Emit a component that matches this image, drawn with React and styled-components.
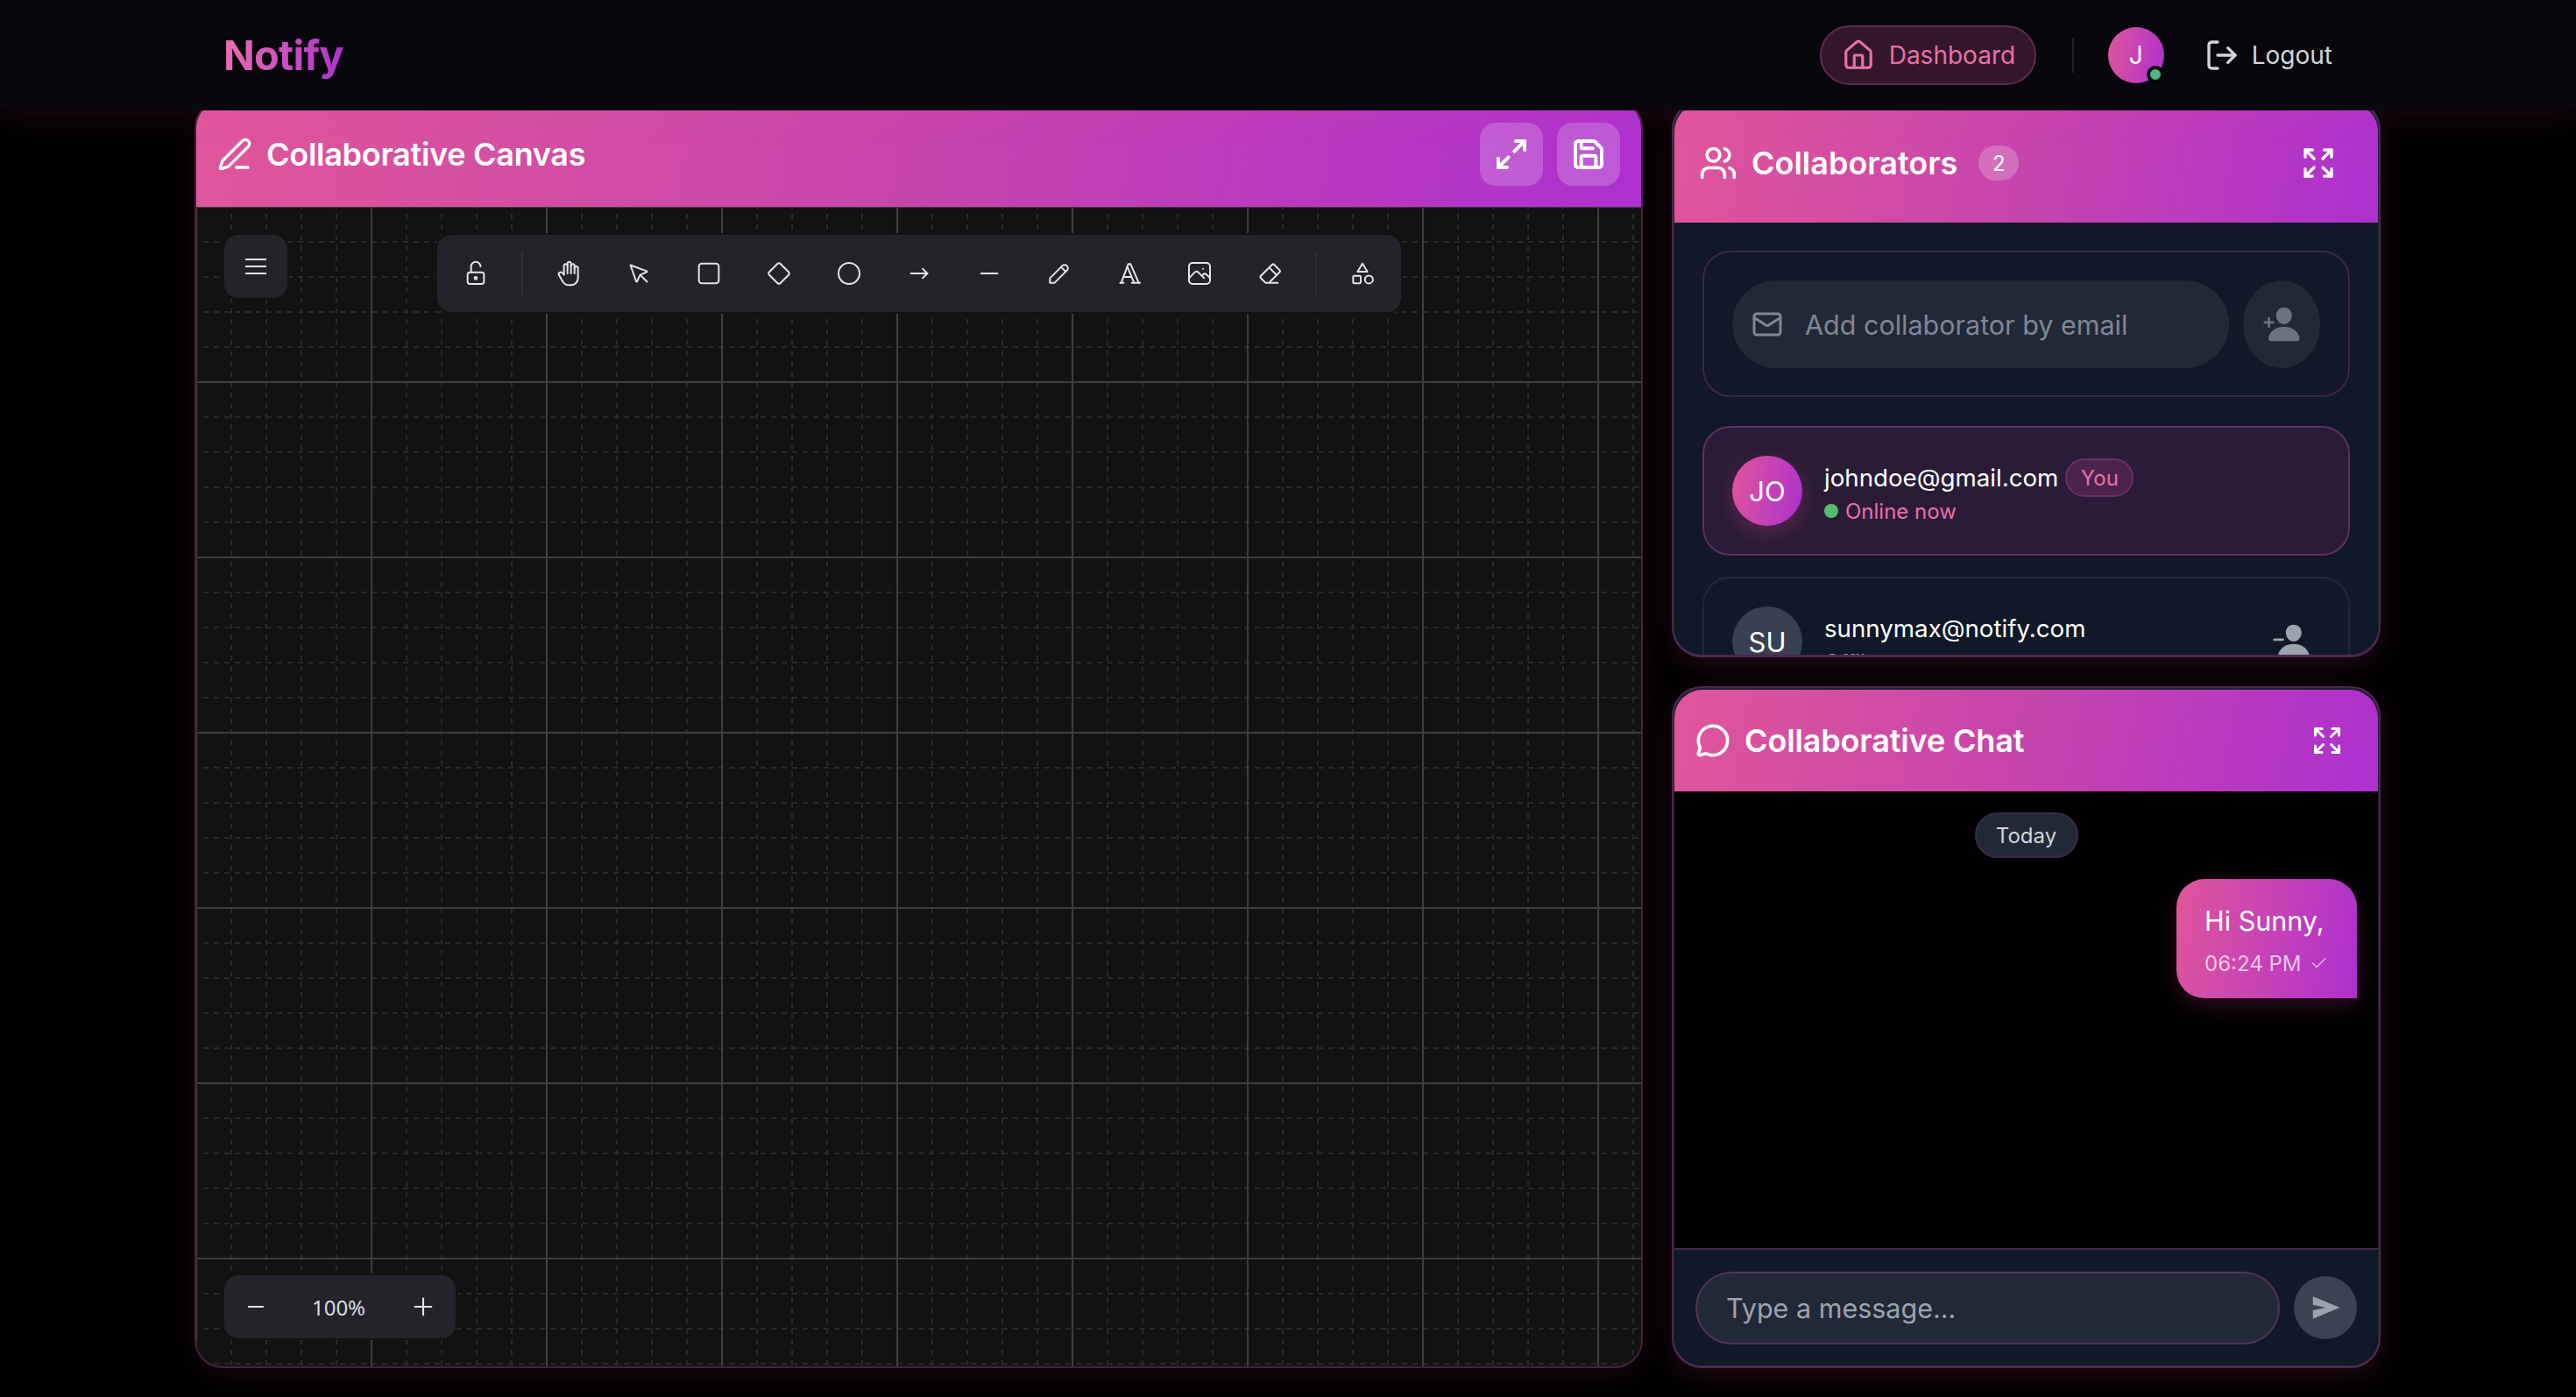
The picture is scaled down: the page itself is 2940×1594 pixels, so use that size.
import React from "react";
import styled, { createGlobalStyle } from "styled-components";
import { PenLine, Maximize2, Save, Users, Expand, MessageCircle, House, LogOut, Mail, Check, Plus, Minus } from "lucide-react";
import { IoPersonAdd, IoPersonRemove } from "react-icons/io5";
import { TbLockOpen, TbHandStop, TbSquareRotated, TbCircle, TbArrowNarrowRight, TbMinus, TbPencil, TbTypography, TbPhoto, TbEraser } from "react-icons/tb";

const GRADIENT = "linear-gradient(100deg, #e0569a 0%, #c645ad 50%, #ad30cf 100%)";

const Global = createGlobalStyle`
  * { box-sizing: border-box; }
  html, body { margin: 0; background: #000; font-family: "Inter", "Liberation Sans", sans-serif; color: #fff; }
  body { height: 1594px; overflow: hidden; }
  input::placeholder { opacity: 1; }
`;

const Page = styled.div`
  width: 2940px;
  height: 1594px;
  background: #000;
`;

const Nav = styled.header`
  position: relative;
  z-index: 10;
  height: 126px;
  margin-bottom: -12px;
  padding: 0 278px 0 255px;
  display: flex;
  align-items: center;
  justify-content: space-between;
  background: linear-gradient(180deg, #05060b 0%, #07070c 60%, #0a060e 100%);
  box-shadow: 0 6px 36px rgba(236, 72, 153, 0.11);
`;

const Logo = styled.div`
  font-size: 47px;
  font-weight: 700;
  line-height: 60px;
  letter-spacing: -0.8px;
  background: linear-gradient(100deg, #ec6fb0, #ad30cf);
  -webkit-background-clip: text;
  background-clip: text;
  color: transparent;
`;

const NavRight = styled.div`
  display: flex;
  align-items: center;
`;

const DashLink = styled.a`
  height: 68px;
  width: 247px;
  padding-left: 23px;
  display: flex;
  align-items: center;
  gap: 16px;
  border: 2px solid #5e2b50;
  border-radius: 34px;
  background: #32172a;
  color: #ea6fa9;
  font-size: 28px;
`;

const NavDivider = styled.div`
  width: 2px;
  height: 40px;
  margin: 0 39px 0 41px;
  background: #2a1a28;
`;

const UserAvatar = styled.div`
  position: relative;
  width: 64px;
  height: 64px;
  border-radius: 50%;
  background: linear-gradient(100deg, #e0569a, #ad30cf);
  display: flex;
  align-items: center;
  justify-content: center;
  font-size: 28px;
`;

const OnlineDot = styled.span`
  position: absolute;
  right: 0;
  bottom: 0;
  width: 20px;
  height: 20px;
  border-radius: 50%;
  background: #4fb582;
  border: 4px solid #05050a;
`;

const LogoutLink = styled.a`
  margin-left: 46px;
  display: flex;
  align-items: center;
  gap: 14px;
  color: #d1d5db;
  font-size: 28px;
`;

const Main = styled.main`
  height: 1447px;
  padding: 0 223px 0 222px;
  display: flex;
  gap: 33px;
`;

const CanvasPanel = styled.section`
  flex: 1;
  min-width: 0;
  display: flex;
  flex-direction: column;
  border: 2px solid #47203f;
  border-radius: 32px;
  overflow: hidden;
  background: #121212;
  box-shadow: 0 8px 32px rgba(236, 72, 153, 0.09);
`;

const CanvasHeader = styled.div`
  flex: 0 0 120px;
  padding: 0 24px 0 24px;
  display: flex;
  align-items: center;
  background: ${GRADIENT};
`;

const HeaderTitle = styled.h2`
  margin: 0 0 0 ${(p) => p.$gap}px;
  font-size: 36px;
  line-height: 44px;
  font-weight: 600;
  letter-spacing: ${(p) => p.$track || 0}px;
  color: #fff;
`;

const HeaderActions = styled.div`
  margin-left: auto;
  display: flex;
  gap: 16px;
`;

const HeaderButton = styled.button`
  width: 72px;
  height: 72px;
  padding: 0;
  border: 0;
  border-radius: 18px;
  background: rgba(255, 255, 255, 0.2);
  color: #fff;
  display: flex;
  align-items: center;
  justify-content: center;
`;

const Stage = styled.div`
  position: relative;
  flex: 1;
  overflow: hidden;
`;

const GridSvg = styled.svg`
  display: block;
  width: 100%;
  height: 100%;
`;

const Island = styled.div`
  position: absolute;
  background: #232329;
  border-radius: 16px;
  box-shadow: 0 0 0 2px #121212;
  color: #e3e3e8;
`;

const MenuButton = styled(Island)`
  left: 32px;
  top: 32px;
  width: 72px;
  height: 72px;
  display: flex;
  align-items: center;
  justify-content: center;
`;

const Toolbar = styled(Island)`
  left: 275px;
  top: 32px;
  height: 88px;
  width: 1100px;
  padding: 0 8px;
  display: flex;
  align-items: center;
`;

const ToolSlot = styled.div`
  flex: 0 0 ${(p) => p.$w}px;
  height: 72px;
  display: flex;
  align-items: center;
  justify-content: center;
  color: #e3e3e8;
`;

const ToolSep = styled.div`
  flex: 0 0 2px;
  height: 48px;
  margin: 0 ${(p) => p.$r}px 0 ${(p) => p.$l}px;
  background: #2f2f37;
`;

const ZoomBar = styled(Island)`
  left: 32px;
  bottom: 32px;
  width: 264px;
  height: 72px;
  padding: 0 21px 0 22px;
  display: flex;
  align-items: center;
  justify-content: space-between;
`;

const ZoomValue = styled.span`
  font-family: "Noto Sans", sans-serif;
  font-size: 24px;
  color: #dcdce0;
`;

const SideColumn = styled.div`
  flex: 0 0 809px;
  display: flex;
  flex-direction: column;
  gap: 33px;
`;

const SidePanel = styled.section`
  flex: ${(p) => (p.$fill ? "1" : "0 0 636px")};
  min-height: 0;
  padding: 2px 1px 0;
  border: 2px solid #4b2a4f;
  border-bottom-width: 3px;
  border-radius: 34px;
  background: #1f2133;
  box-shadow: 0 8px 32px rgba(236, 72, 153, 0.14);
`;

const PanelInner = styled.div`
  height: 100%;
  display: flex;
  flex-direction: column;
  overflow: hidden;
  border-radius: 32px;
  background: ${(p) => (p.$dark ? "#000" : "#111827")};
`;

const SideHeader = styled.div`
  flex: 0 0 ${(p) => p.$h}px;
  padding: 0 ${(p) => p.$pr}px 0 ${(p) => p.$pl}px;
  display: flex;
  align-items: center;
  background: ${GRADIENT};
  color: #fff;
`;

const CountBadge = styled.span`
  width: 46px;
  height: 40px;
  margin-left: 24px;
  border-radius: 20px;
  background: rgba(255, 255, 255, 0.22);
  display: flex;
  align-items: center;
  justify-content: center;
  font-size: 24px;
`;

const HeaderIconSlot = styled.span`
  margin-left: auto;
  display: flex;
`;

const CollabBody = styled.div`
  padding: 32px 32px 0;
  display: flex;
  flex-direction: column;
`;

const AddCard = styled.div`
  height: 167px;
  margin-bottom: 33px;
  padding: 32px;
  display: flex;
  gap: 16px;
  border: 2px solid #3c2746;
  border-radius: 32px;
`;

const InputWrap = styled.div`
  position: relative;
  flex: 1;
  height: 100px;
  color: #7f8794;
`;

const InputIcon = styled.span`
  position: absolute;
  left: 22px;
  top: 32px;
  display: flex;
`;

const EmailInput = styled.input`
  width: 100%;
  height: 100%;
  padding: 0 24px 0 83px;
  border: 0;
  outline: 0;
  border-radius: 50px;
  background: #212936;
  color: #fff;
  font: 400 30.5px "Inter", sans-serif;
  &::placeholder { color: #7f8794; }
`;

const AddButton = styled.button`
  flex: 0 0 88px;
  height: 100px;
  padding: 0;
  border: 0;
  border-radius: 50%;
  background: #212936;
  color: #6b7280;
  display: flex;
  align-items: center;
  justify-content: center;
`;

const Member = styled.div`
  flex: 0 0 146px;
  margin-bottom: 24px;
  padding: 32px;
  display: flex;
  align-items: center;
  gap: 25px;
  border: 2px solid ${(p) => (p.$me ? "#5f2f5f" : "#1f2937")};
  border-radius: 32px;
  background: ${(p) => (p.$me ? "#2a1c36" : "transparent")};
`;

const MemberAvatar = styled.div`
  flex: 0 0 80px;
  height: 80px;
  border-radius: 50%;
  display: flex;
  align-items: center;
  justify-content: center;
  font-size: 31px;
  color: #fff;
  background: ${(p) => (p.$me ? "linear-gradient(100deg, #e0569a, #ad30cf)" : "#374151")};
  box-shadow: ${(p) => (p.$me ? "0 8px 24px rgba(236, 72, 153, 0.25)" : "none")};
`;

const MemberInfo = styled.div`
  flex: 1;
  display: flex;
  flex-direction: column;
  gap: 2px;
  padding-top: 4px;
`;

const EmailRow = styled.div`
  display: flex;
  align-items: center;
  gap: 8px;
  height: 40px;
  font-size: 27.7px;
  color: #fff;
`;

const YouTag = styled.span`
  width: 78px;
  height: 44px;
  border: 2px solid #6b2f62;
  border-radius: 22px;
  background: #4c2449;
  color: #ec6fa9;
  font-size: 24px;
  display: flex;
  align-items: center;
  justify-content: center;
`;

const StatusRow = styled.div`
  display: flex;
  align-items: center;
  gap: 8px;
  height: 32px;
  font-size: 24px;
  color: ${(p) => (p.$on ? "#ea6fa9" : "#9ca3af")};
`;

const StatusDot = styled.span`
  width: 16px;
  height: 16px;
  border-radius: 50%;
  background: #55bd6b;
`;

const RemoveButton = styled.span`
  display: flex;
  color: #9ca3af;
  margin-right: 11px;
`;

const ChatMessages = styled.div`
  flex: 1;
  min-height: 0;
  padding: 24px;
  display: flex;
  flex-direction: column;
  background: #000;
`;

const DayPill = styled.div`
  align-self: center;
  width: 118px;
  height: 52px;
  border: 2px solid #3c2a48;
  border-radius: 26px;
  background: #212936;
  color: #d1d5db;
  font-size: 24px;
  display: flex;
  align-items: center;
  justify-content: center;
`;

const Bubble = styled.div`
  align-self: flex-end;
  margin-top: 24px;
  width: 206px;
  height: 136px;
  padding: 24px 32px;
  border-radius: 32px 32px 0 32px;
  background: linear-gradient(100deg, #e0569a, #ad30cf);
  box-shadow: 0 8px 24px rgba(236, 72, 153, 0.2);
`;

const BubbleText = styled.div`
  font-size: 30.5px;
  line-height: 48px;
  white-space: nowrap;
  color: #fff;
`;

const BubbleMeta = styled.div`
  margin-top: 8px;
  display: flex;
  align-items: center;
  gap: 10px;
  height: 32px;
  font-size: 24px;
  white-space: nowrap;
  color: rgba(255, 255, 255, 0.7);
`;

const ChatBar = styled.div`
  flex: 0 0 134px;
  padding: 24px;
  display: flex;
  align-items: center;
  gap: 16px;
  border-top: 2px solid #4a2a4e;
  background: #111827;
`;

const ChatInput = styled.input`
  flex: 1;
  min-width: 0;
  height: 83px;
  padding: 0 33px;
  border: 2px solid #5a3058;
  border-radius: 42px;
  outline: 0;
  background: #212936;
  color: #fff;
  font: 400 30.5px "Inter", sans-serif;
  &::placeholder { color: #9ca3af; }
`;

const SendButton = styled.button`
  flex: 0 0 72px;
  height: 72px;
  padding: 0;
  border: 0;
  border-radius: 50%;
  background: #3b4353;
  color: #9ca3af;
  display: flex;
  align-items: center;
  justify-content: center;
`;

function CanvasGrid() {
  const W = 1649, H = 1325;
  const vs = [];
  for (let x = 0; x <= W; x += 40) vs.push(x);
  const hs = [];
  for (let y = 0; y <= H; y += 40) hs.push(y);
  return (
    <GridSvg viewBox={`0 0 ${W} ${H}`} preserveAspectRatio="xMinYMin slice">
      {vs.filter((x) => x % 200 !== 0).map((x) => (
        <line key={`v${x}`} x1={x} x2={x} y1={-4} y2={H} stroke="#292929" strokeWidth="2" strokeDasharray="6 6" />
      ))}
      {hs.filter((y) => y % 200 !== 0).map((y) => (
        <line key={`h${y}`} x1={-4} x2={W} y1={y} y2={y} stroke="#292929" strokeWidth="2" strokeDasharray="6 6" />
      ))}
      {vs.filter((x) => x % 200 === 0).map((x) => (
        <line key={`V${x}`} x1={x} x2={x} y1={0} y2={H} stroke="#3d3d3d" strokeWidth="2" />
      ))}
      {hs.filter((y) => y % 200 === 0).map((y) => (
        <line key={`H${y}`} x1={0} x2={W} y1={y} y2={y} stroke="#3d3d3d" strokeWidth="2" />
      ))}
    </GridSvg>
  );
}

const I = { size: 32, strokeWidth: 1.5 };

const BurgerIcon = () => (
  <svg width="24" height="18" viewBox="0 0 24 18" fill="none" stroke="#e3e3e8" strokeWidth="2">
    <path d="M0 1h24M0 9h24M0 17h24" />
  </svg>
);

const PointerIcon = () => (
  <svg width="38" height="38" viewBox="0 0 24 24" fill="none" stroke="currentColor" strokeWidth="1.25" strokeLinecap="round" strokeLinejoin="round">
    <path d="M6 6l4.153 11.793a.365 .365 0 0 0 .331 .207a.366 .366 0 0 0 .332 -.207l2.184 -4.793l4.787 -1.994a.355 .355 0 0 0 .213 -.323a.355 .355 0 0 0 -.213 -.323l-11.787 -4.36z" />
    <path d="M13.5 13.5l4.5 4.5" />
  </svg>
);

const RectIcon = () => (
  <svg width="32" height="32" viewBox="0 0 24 24" fill="none" stroke="currentColor" strokeWidth="1.5">
    <rect x="3.5" y="3.5" width="17" height="17" rx="2.5" />
  </svg>
);

const ShapesIcon = () => (
  <svg width="32" height="32" viewBox="0 0 24 24" fill="none" stroke="currentColor" strokeWidth="1.5" strokeLinejoin="round">
    <path d="M12 3.5l4.2 7h-8.4z" />
    <rect x="4" y="14" width="6.5" height="6.5" rx="1" />
    <circle cx="17.5" cy="17.2" r="3.4" />
  </svg>
);

const SendIcon = () => (
  <svg width="36" height="36" viewBox="0 0 24 24" fill="currentColor">
    <path d="M2.5 3.5L23 12 2.5 20.5v-6.3L12 12 2.5 9.8z" />
  </svg>
);

const TOOLS = [
  <TbHandStop {...I} />, <PointerIcon />, <RectIcon />, <TbSquareRotated size={28} strokeWidth={1.7} />, <TbCircle {...I} />,
  <TbArrowNarrowRight {...I} />, <TbMinus {...I} />, <TbPencil {...I} />, <TbTypography {...I} />, <TbPhoto {...I} />, <TbEraser {...I} />,
];

export default function App() {
  return (
    <Page>
      <Global />
      <Nav>
        <Logo>Notify</Logo>
        <NavRight>
          <DashLink><House size={38} strokeWidth={2} />Dashboard</DashLink>
          <NavDivider />
          <UserAvatar>J<OnlineDot /></UserAvatar>
          <LogoutLink><LogOut size={40} strokeWidth={2} />Logout</LogoutLink>
        </NavRight>
      </Nav>
      <Main>
        <CanvasPanel>
          <CanvasHeader>
            <PenLine size={40} color="#fff" strokeWidth={2} />
            <HeaderTitle $gap={16} $track={-0.28}>Collaborative Canvas</HeaderTitle>
            <HeaderActions>
              <HeaderButton><Maximize2 size={40} strokeWidth={2.4} /></HeaderButton>
              <HeaderButton><Save size={40} strokeWidth={2.4} /></HeaderButton>
            </HeaderActions>
          </CanvasHeader>
          <Stage>
            <CanvasGrid />
            <MenuButton><BurgerIcon /></MenuButton>
            <Toolbar>
              <ToolSlot $w={72}><TbLockOpen {...I} /></ToolSlot>
              <ToolSep $l={16} $r={12} />
              {TOOLS.map((t, i) => <ToolSlot key={i} $w={80}>{t}</ToolSlot>)}
              <ToolSep $l={12} $r={16} />
              <ToolSlot $w={72}><ShapesIcon /></ToolSlot>
            </Toolbar>
            <ZoomBar>
              <Minus size={28} strokeWidth={1.6} />
              <ZoomValue>100%</ZoomValue>
              <Plus size={32} strokeWidth={1.6} />
            </ZoomBar>
          </Stage>
        </CanvasPanel>
        <SideColumn>
          <SidePanel>
            <PanelInner>
              <SideHeader $h={136} $pl={28} $pr={48}>
                <Users size={44} strokeWidth={2} />
                <HeaderTitle $gap={16}>Collaborators</HeaderTitle>
                <CountBadge>2</CountBadge>
                <HeaderIconSlot><Expand size={40} strokeWidth={2} /></HeaderIconSlot>
              </SideHeader>
              <CollabBody>
                <AddCard>
                  <InputWrap>
                    <InputIcon><Mail size={36} strokeWidth={2} /></InputIcon>
                    <EmailInput placeholder="Add collaborator by email" />
                  </InputWrap>
                  <AddButton><IoPersonAdd size={44} /></AddButton>
                </AddCard>
                <Member $me>
                  <MemberAvatar $me>JO</MemberAvatar>
                  <MemberInfo>
                    <EmailRow>johndoe@gmail.com<YouTag>You</YouTag></EmailRow>
                    <StatusRow $on><StatusDot />Online now</StatusRow>
                  </MemberInfo>
                </Member>
                <Member>
                  <MemberAvatar>SU</MemberAvatar>
                  <MemberInfo>
                    <EmailRow>sunnymax@notify.com</EmailRow>
                    <StatusRow>Offline</StatusRow>
                  </MemberInfo>
                  <RemoveButton><IoPersonRemove size={44} /></RemoveButton>
                </Member>
              </CollabBody>
            </PanelInner>
          </SidePanel>
          <SidePanel $fill>
            <PanelInner $dark>
              <SideHeader $h={116} $pl={24} $pr={40}>
                <MessageCircle size={40} strokeWidth={2.2} />
                <HeaderTitle $gap={16} $track={-0.14}>Collaborative Chat</HeaderTitle>
                <HeaderIconSlot><Expand size={36} strokeWidth={2} /></HeaderIconSlot>
              </SideHeader>
              <ChatMessages>
                <DayPill>Today</DayPill>
                <Bubble>
                  <BubbleText>Hi Sunny,</BubbleText>
                  <BubbleMeta>06:24 PM <Check size={24} strokeWidth={1.5} /></BubbleMeta>
                </Bubble>
              </ChatMessages>
              <ChatBar>
                <ChatInput placeholder="Type a message..." />
                <SendButton><SendIcon /></SendButton>
              </ChatBar>
            </PanelInner>
          </SidePanel>
        </SideColumn>
      </Main>
    </Page>
  );
}
